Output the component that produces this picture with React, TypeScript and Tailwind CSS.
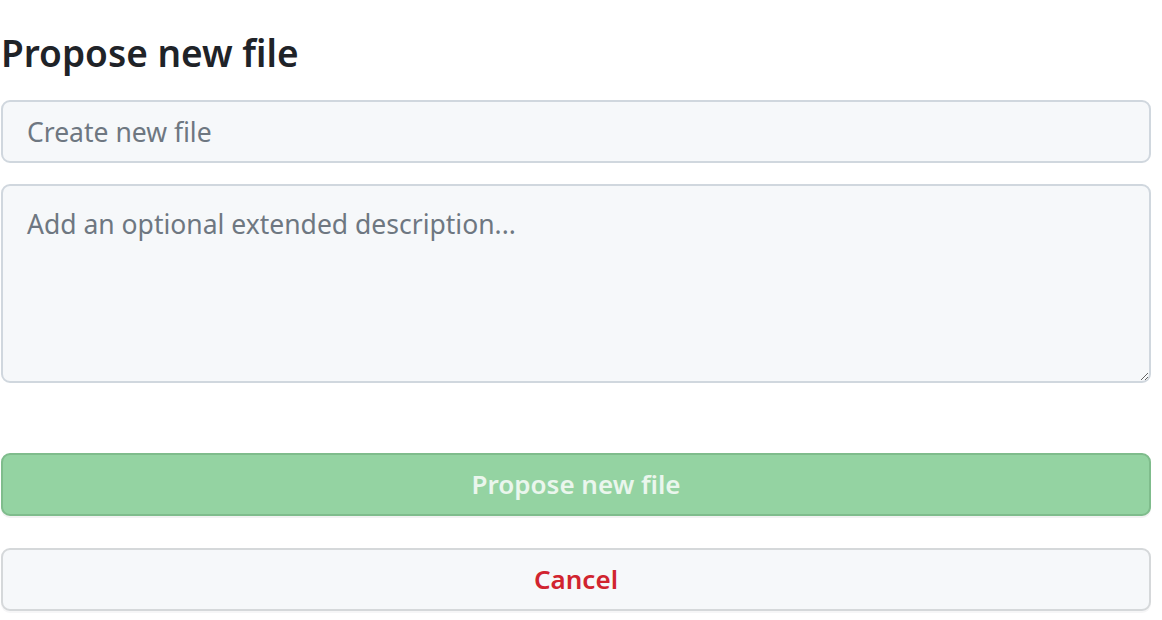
import React from "react";

export default function App() {
  return (
    <div
      className="bg-white w-[1162px] h-[620px] overflow-hidden pl-[1px]"
      style={{ fontFamily: '"Noto Sans", "Open Sans", sans-serif' }}
    >
      <div className="w-[1150px] flex flex-col">
        <h2 className="pt-[30px] text-[37px] leading-[45px] font-semibold text-[#1f2328]">
          Propose new file
        </h2>
        <input
          type="text"
          placeholder="Create new file"
          className="mt-[25px] h-[63px] w-full rounded-[9px] border-2 border-[#d0d7de] bg-[#f6f8fa] px-[24px] text-[26.5px] text-[#1f2328] placeholder:text-[#6e7781] outline-none"
        />
        <textarea
          placeholder="Add an optional extended description..."
          className="mt-[21px] h-[199px] w-full rounded-[9px] border-2 border-[#d0d7de] bg-[#f6f8fa] px-[24px] pt-[19px] text-[26.5px] leading-[38px] text-[#1f2328] placeholder:text-[#6e7781] outline-none resize-y"
        />
        <button
          type="button"
          disabled
          className="mt-[70px] h-[63px] w-full rounded-[9px] border-2 border-[#7fbc8c] bg-[#94d3a2] text-[26px] font-semibold text-[#eaf6ed] shadow-[0_2px_0_rgba(31,35,40,0.06)]"
        >
          Propose new file
        </button>
        <button
          type="button"
          className="mt-[32px] h-[63px] w-full rounded-[9px] border-2 border-[#d5d8da] bg-[#f6f8fa] text-[26px] font-semibold text-[#d1242f] shadow-[0_2px_0_rgba(31,35,40,0.04)]"
        >
          Cancel
        </button>
      </div>
    </div>
  );
}
